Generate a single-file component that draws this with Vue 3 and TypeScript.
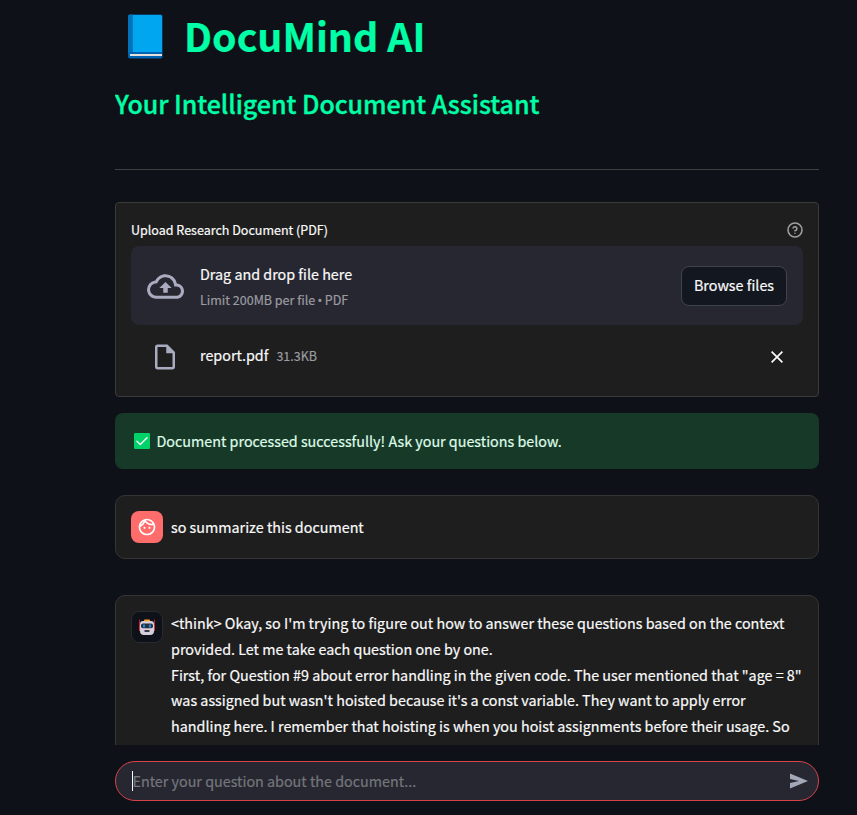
<script setup lang="ts">
const fileName = 'report.pdf'
const fileSize = '31.3KB'
const question = 'so summarize this document'
const answer: string[] = [
  "<think> Okay, so I'm trying to figure out how to answer these questions based on the context",
  'provided. Let me take each question one by one.',
  'First, for Question #9 about error handling in the given code. The user mentioned that "age = 8"',
  "was assigned but wasn't hoisted because it's a const variable. They want to apply error",
  'handling here. I remember that hoisting is when you hoist assignments before their usage. So',
]
</script>

<template>
  <div class="app">
    <main class="scroll">
      <h1 class="title">
        <svg class="book" width="36" height="46" viewBox="0 0 36 46">
          <rect x="1" y="0.500" width="34.500" height="44" rx="2" fill="#0063b1" />
          <path d="M5.500 1h28q1.500 0 1.500 1.500V38H5.500z" fill="#00a6f0" />
          <path d="M3 0.500H5.500V38H3q-2 0-2 2V2.500q0-2 2-2z" fill="#0072b8" />
          <rect x="3" y="40" width="32" height="2" fill="#e6e0dc" />
        </svg>
        <span class="title-text">DocuMind AI</span>
      </h1>
      <h3 class="subtitle">Your Intelligent Document Assistant</h3>
      <hr class="rule" />

      <section class="uploader">
        <div class="label">
          <span>Upload Research Document (PDF)</span>
          <svg width="16" height="16" viewBox="0 0 24 24" fill="none" stroke="#a0a0a1" stroke-width="2.300" stroke-linecap="round" stroke-linejoin="round">
            <circle cx="12" cy="12" r="10.500" />
            <path d="M9.100 9a3 3 0 0 1 5.800 1c0 2-3 3-3 3M12 17h.01" />
          </svg>
        </div>
        <div class="dropzone">
          <svg class="cloud" width="37" height="37" viewBox="0 0 24 24" fill="#a9acc0">
            <path d="M19.350 10.040A7.490 7.490 0 0 0 12 4C9.110 4 6.600 5.640 5.350 8.040A5.994 5.994 0 0 0 0 14c0 3.310 2.690 6 6 6h13c2.760 0 5-2.240 5-5 0-2.640-2.050-4.780-4.650-4.960zM19 18H6c-2.210 0-4-1.790-4-4 0-2.050 1.530-3.760 3.560-3.970l1.070-.11.5-.95A5.469 5.469 0 0 1 12 6c2.620 0 4.880 1.860 5.390 4.430l.3 1.500 1.530.11A2.980 2.980 0 0 1 22 15c0 1.650-1.350 3-3 3zM8 13h2.550v3h2.900v-3H16l-4-4z" />
          </svg>
          <div class="drop-text">
            <span class="drop-main">Drag and drop file here</span>
            <span class="small">Limit 200MB per file <span class="bullet">•</span> PDF</span>
          </div>
          <button class="browse" type="button">Browse files</button>
        </div>
        <div class="file">
          <svg class="file-icon" width="30" height="30" viewBox="0 0 24 24" fill="#a9acc0">
            <path d="M14 2H6c-1.100 0-2 .9-2 2v16c0 1.100.9 2 2 2h12c1.100 0 2-.9 2-2V8l-6-6zM6 20V4h7v5h5v11H6z" />
          </svg>
          <span class="file-name">{{ fileName }}</span>
          <span class="small size">{{ fileSize }}</span>
          <svg class="close" width="12" height="12" viewBox="0 0 12 12" stroke="#fafafa" stroke-width="1.700">
            <path d="M.6.6l10.800 10.800M11.400.6L.6 11.400" />
          </svg>
        </div>
      </section>

      <section class="success">
        <svg width="16" height="16" viewBox="0 0 16 16">
          <rect width="16" height="16" rx="1.200" fill="#00d26a" />
          <path d="M3 8.300l3.300 3.200L13 4.800" fill="none" stroke="#f4f4f4" stroke-width="1.500" stroke-linecap="round" stroke-linejoin="round" />
        </svg>
        <span>Document processed successfully! Ask your questions below.</span>
      </section>

      <section class="message user">
        <div class="avatar avatar-user">
          <svg width="20" height="20" viewBox="0 0 24 24" fill="#fff">
            <path d="M10.250 13a1.250 1.250 0 1 1-2.500 0 1.250 1.250 0 0 1 2.500 0zM15 11.750a1.250 1.250 0 1 0 0 2.500 1.250 1.250 0 0 0 0-2.500zM22 12c0 5.520-4.480 10-10 10S2 17.520 2 12 6.480 2 12 2s10 4.480 10 10zM10.660 4.120C12.060 6.440 14.600 8 17.500 8c.46 0 .91-.05 1.340-.12C17.440 5.560 14.900 4 12 4c-.46 0-.91.05-1.340.12zM4.420 9.470a8.046 8.046 0 0 0 3.660-4.440 8.046 8.046 0 0 0-3.660 4.440zM20 12c0-.78-.12-1.530-.33-2.240-.7.150-1.420.24-2.170.24a10 10 0 0 1-7.760-3.690A10.016 10.016 0 0 1 4 11.860c.01.040 0 .090 0 .140 0 4.410 3.590 8 8 8s8-3.590 8-8z" />
          </svg>
        </div>
        <p>{{ question }}</p>
      </section>

      <section class="message bot">
        <div class="avatar avatar-bot">
          <svg width="18" height="18" viewBox="0 0 18 18">
            <path d="M1.500 1.500v9M16.500 1.500v9" stroke="#b52535" stroke-width="1" />
            <path d="M1 7h2v6H1zM15 7h2v6h-2z" fill="#d93645" />
            <path d="M5 3h8q3 0 3 3v7q0 4-4 4H6q-4 0-4-4V6q0-3 3-3z" fill="#d5cfdc" />
            <rect x="6" y="1.500" width="6" height="1.800" rx=".8" fill="#f9a12b" />
            <rect x="3" y="5.500" width="12" height="4.700" rx="2" fill="#342d38" />
            <rect x="5" y="6.500" width="2" height="3" fill="#0095e8" />
            <rect x="11" y="6.500" width="2" height="3" fill="#0095e8" />
            <rect x="6.500" y="12" width="5" height="2" rx=".5" fill="#403647" />
          </svg>
        </div>
        <p><span v-for="line in answer" :key="line" class="line">{{ line }}</span></p>
      </section>
    </main>

    <footer class="bottom">
      <div class="chat-input">
        <span class="caret"></span>
        <span class="placeholder">Enter your question about the document...</span>
        <svg width="18" height="16" viewBox="0 0 18 16" fill="#a3a8b8">
          <path d="M0 0.500L18 8 0 15.500V10l9-2-9-2z" />
        </svg>
      </div>
    </footer>
  </div>
</template>

<style>
body {
  margin: 0;
  background: #0e1117;
  overflow: hidden;
}
</style>

<style scoped>
.app {
  box-sizing: border-box;
  width: 857px;
  height: 815px;
  display: flex;
  flex-direction: column;
  padding: 0 38px 0 115px;
  background: #0e1117;
  color: #fafafa;
  font-family: "Noto Sans CJK SC", "Noto Sans", sans-serif;
  font-size: 14.330px;
  line-height: 26px;
  white-space: nowrap;
  -webkit-text-stroke: 0.200px currentColor;
}
.app * {
  box-sizing: border-box;
}
.scroll {
  height: 745px;
  flex: none;
  overflow: hidden;
}
.title {
  display: flex;
  align-items: flex-start;
  gap: 21px;
  height: 74px;
  margin: 0;
  padding: 14px 0 0 12px;
  color: #00ffa6;
  font-size: 39.300px;
  font-weight: 700;
  line-height: 46px;
}
.title-text {
  margin-top: -2px;
}
.subtitle {
  height: 95px;
  margin: 0;
  padding-top: 12px;
  color: #00ffa6;
  font-size: 25px;
  font-weight: 500;
  line-height: 34px;
  letter-spacing: -0.040px;
  -webkit-text-stroke: 0.350px currentColor;
}
.rule {
  height: 1px;
  margin: 0 0 32px;
  border: 0;
  background: #3f4143;
}
.uploader {
  height: 195px;
  padding: 15px;
  border: 1px solid #3a3a3a;
  border-radius: 4px;
  background: #1e1e1e;
}
.label {
  display: flex;
  align-items: center;
  justify-content: space-between;
  height: 24px;
  margin-bottom: 4px;
  font-size: 12.530px;
}
.dropzone {
  display: flex;
  align-items: center;
  height: 79px;
  padding: 0 16px;
  border-radius: 8px;
  background: #262730;
}
.cloud {
  margin: 1px 16px 0 0;
}
.drop-text {
  display: flex;
  flex-direction: column;
  flex: 1;
  padding-top: 2px;
}
.small {
  color: #9b9ba0;
  font-size: 12.530px;
}
.bullet {
  display: inline-block;
  width: 4px;
  margin: 0 0.500px 0 -0.500px;
  font-family: "Noto Sans", sans-serif;
  line-height: 1;
}
.browse {
  width: 106px;
  height: 40px;
  padding: 0 0 1px;
  border: 1px solid #41434b;
  border-radius: 8px;
  background: #131720;
  color: #fafafa;
  font: inherit;
}
.file {
  display: flex;
  align-items: center;
  height: 63px;
  padding: 0 20px 0 19px;
}
.file-icon {
  margin: 1px 20px 0 0;
}
.file-name {
  padding-bottom: 4px;
}
.size {
  flex: 1;
  margin-left: 8px;
  padding-bottom: 2px;
}
.close {
  margin-top: 1px;
}
.success {
  display: flex;
  align-items: center;
  gap: 6.500px;
  height: 56px;
  margin-top: 16px;
  padding-left: 19px;
  border-radius: 8px;
  background: #173928;
  color: #dffde9;
}
.message {
  display: flex;
  align-items: flex-start;
  gap: 8px;
  padding: 15px;
  border: 1px solid #353535;
  border-radius: 10px;
  background: #1e1e1e;
}
.message p {
  margin: 0;
}
.user {
  height: 64px;
  margin-top: 26px;
}
.user p {
  padding-top: 3px;
}
.bot {
  height: 260px;
  margin-top: 36px;
}
.bot p {
  margin-top: -1px;
  line-height: 25.800px;
}
.line {
  display: block;
}
.avatar {
  display: flex;
  align-items: center;
  justify-content: center;
  flex: none;
  width: 32px;
  height: 32px;
  border-radius: 8px;
}
.avatar-user {
  background: #ff6c6c;
}
.avatar-bot {
  border: 1px solid #292b33;
  background: #0e1117;
}
.bottom {
  padding-top: 16px;
}
.chat-input {
  display: flex;
  align-items: center;
  height: 40px;
  padding: 0 10px 0 16px;
  border: 1px solid #d6444b;
  border-radius: 20px;
  background: #262730;
}
.caret {
  width: 1px;
  height: 20px;
  background: #fafafa;
}
.placeholder {
  flex: 1;
  margin-left: -0.500px;
  color: #75767c;
}
</style>
